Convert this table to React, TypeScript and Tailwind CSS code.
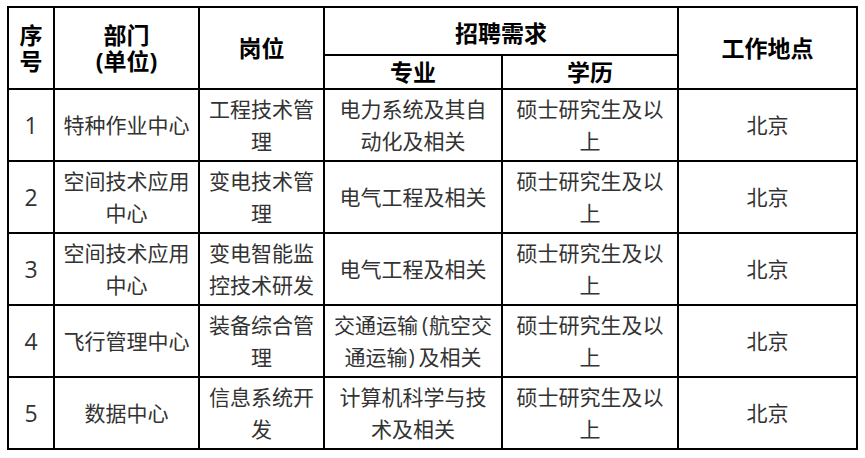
import type { ReactNode } from "react";

type Row = { no: string; dept: string; post: string; major: ReactNode; edu: string; place: string };

const rows: Row[] = [
  { no: "1", dept: "特种作业中心", post: "工程技术管理", major: "电力系统及其自动化及相关", edu: "硕士研究生及以上", place: "北京" },
  { no: "2", dept: "空间技术应用中心", post: "变电技术管理", major: "电气工程及相关", edu: "硕士研究生及以上", place: "北京" },
  { no: "3", dept: "空间技术应用中心", post: "变电智能监控技术研发", major: "电气工程及相关", edu: "硕士研究生及以上", place: "北京" },
  {
    no: "4",
    dept: "飞行管理中心",
    post: "装备综合管理",
    major: (
      <>
        交通运输<span className="pl-[4px] pr-[1px]">(</span>航空交通运输<span className="pl-[1px] pr-[4px]">)</span>及相关
      </>
    ),
    edu: "硕士研究生及以上",
    place: "北京",
  },
  { no: "5", dept: "数据中心", post: "信息系统开发", major: "计算机科学与技术及相关", edu: "硕士研究生及以上", place: "北京" },
];

const head = "bg-white flex items-center justify-center text-center font-bold text-black text-[23px] leading-[26px]";
const cell = "bg-white flex items-center justify-center text-center px-[5px] text-[21px] leading-[32px] text-[#333]";

function Cell({ children, className = "" }: { children: ReactNode; className?: string }) {
  return (
    <div className={`${cell} ${className}`}>
      <span>{children}</span>
    </div>
  );
}

export default function App() {
  return (
    <div
      className="w-[865px] h-[458px] bg-white pl-[7px] pt-[6px]"
      style={{ fontFamily: '"Open Sans", "Noto Sans CJK SC", sans-serif' }}
    >
      <div className="grid w-fit grid-cols-[44px_143px_123px_176px_174px_177px] grid-rows-[46px_32px_repeat(5,70px)] gap-[2px] bg-black p-[2px]">
        <div className={`${head} row-span-2 flex-col`}>
          <span>序</span>
          <span>号</span>
        </div>
        <div className={`${head} row-span-2 flex-col`}>
          <span>部门</span>
          <span>(单位)</span>
        </div>
        <div className={`${head} row-span-2`}>岗位</div>
        <div className={`${head} col-span-2 pt-[4px]`}>招聘需求</div>
        <div className={`${head} row-span-2`}>工作地点</div>
        <div className={head}>专业</div>
        <div className={head}>学历</div>

        {rows.map((r) => (
          <div key={r.no} className="contents">
            <Cell className="text-[23px] text-[#111]">{r.no}</Cell>
            <Cell>{r.dept}</Cell>
            <Cell>{r.post}</Cell>
            <Cell>{r.major}</Cell>
            <Cell>{r.edu}</Cell>
            <Cell>{r.place}</Cell>
          </div>
        ))}
      </div>
    </div>
  );
}
